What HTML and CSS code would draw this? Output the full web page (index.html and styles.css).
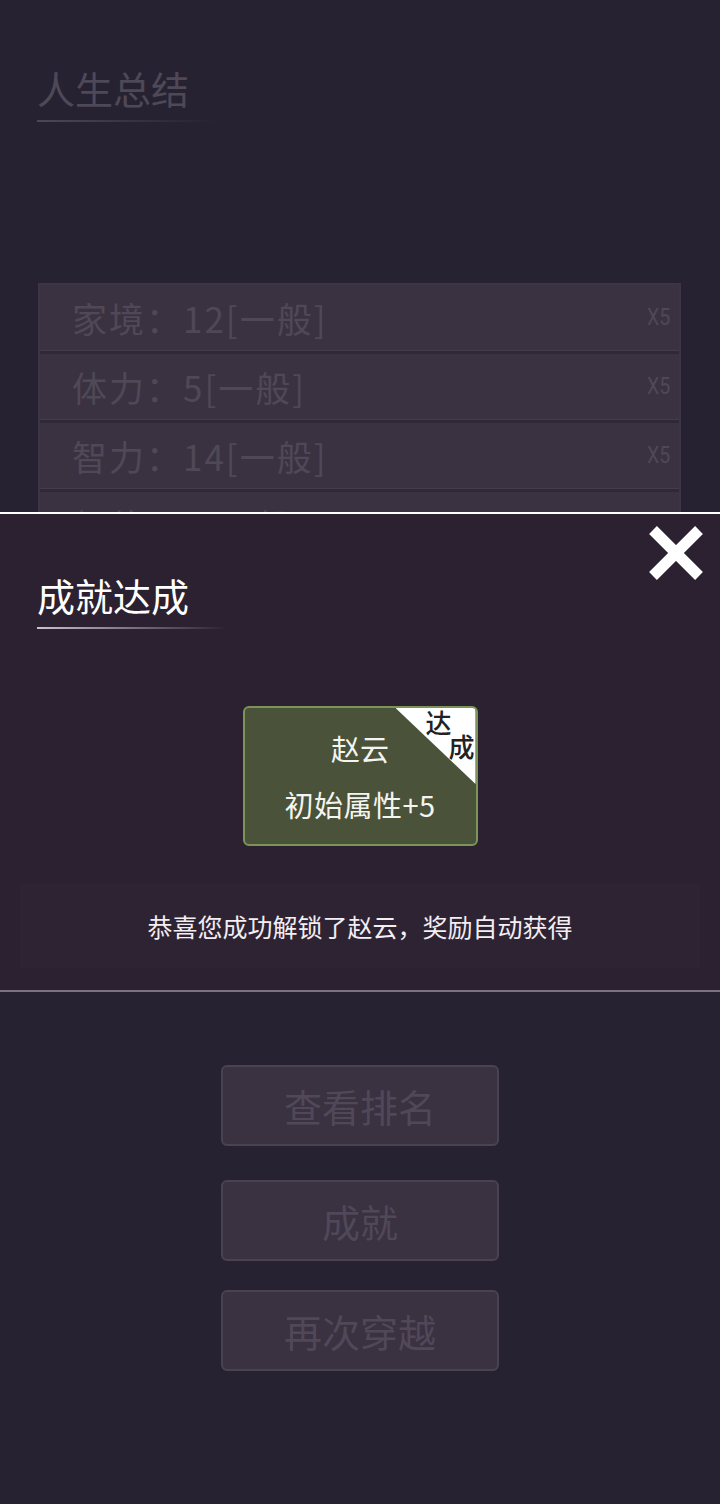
FILE: index.html
```html
<!DOCTYPE html>
<html>

<head>
  <meta charset="UTF-8">
  <title>人生总结</title>
  <link rel="stylesheet" href="styles.css">
</head>

<body>
  <section class="page">
    <div class="heading">
      <h2>人生总结</h2>
      <div class="heading-line"></div>
    </div>

    <!-- summary list -->
    <ul class="summary">
      <li><span>家境：12[一般]</span><em>X5</em></li>
      <li><span>体力：5[一般]</span><em>X5</em></li>
      <li><span>智力：14[一般]</span><em>X5</em></li>
      <li><span>颜值：6[一般]</span><em>X5</em></li>
    </ul>

    <div class="actions">
      <a href="#" class="action-btn">查看排名</a>
      <a href="#" class="action-btn second">成就</a>
      <a href="#" class="action-btn third">再次穿越</a>
    </div>
  </section>

  <!-- achievement popup -->
  <div class="popup">
    <a href="#" class="close-btn">
      <svg width="58" height="58" viewBox="0 0 58 58">
        <path d="M6 6 L52 52 M52 6 L6 52" stroke="#fff" stroke-width="11" stroke-linecap="butt" fill="none"/>
      </svg>
    </a>

    <div class="heading">
      <h2 class="popup-title">成就达成</h2>
      <div class="heading-line bright"></div>
    </div>

    <div class="card">
      <div class="card-corner"></div>
      <span class="corner-a">达</span>
      <span class="corner-b">成</span>
      <p class="card-name">赵云</p>
      <p class="card-reward">初始属性+5</p>
    </div>

    <div class="message">恭喜您成功解锁了赵云，奖励自动获得</div>
  </div>
</body>

</html>
```

FILE: styles.css
```css
body {
  font-family: "Noto Sans CJK SC", "Noto Sans", sans-serif;
  background-color: #262232;
  margin: 0;
  padding: 0;
  width: 720px;
  height: 1504px;
  overflow: hidden;
  position: relative;
}

.page {
  padding-top: 68px;
}

.heading {
  padding-left: 37px;
}

h2 {
  margin: 0;
  font-size: 38px;
  font-weight: normal;
  line-height: 40px;
  color: #4f4857;
}

.heading-line {
  margin-top: 12px;
  width: 180px;
  height: 2px;
  background: linear-gradient(to right, #4d4656, #4d465600);
}

/* summary list, the rest of it lies under the popup */
.summary {
  list-style-type: none;
  margin: 161px 0 0 38px;
  padding: 0;
  width: 639px;
  height: 480px;
  border: 2px solid #3e3447;
  background-color: #2e2838;
}

.summary li {
  display: flex;
  align-items: center;
  justify-content: space-between;
  height: 65px;
  margin-bottom: 3px;
  padding: 0 7px 0 32px;
  background-color: #3a3241;
  border-bottom: 1px solid #443b4b;
}

.summary li span {
  font-size: 35px;
  letter-spacing: 2px;
  color: #4f4857;
}

.summary li em {
  font-style: normal;
  font-family: Roboto, sans-serif;
  font-size: 23px;
  color: #4f4857;
  transform: scaleX(0.85);
}

/* buttons */
.actions {
  display: flex;
  flex-direction: column;
  align-items: center;
  margin-top: 298px;
}

.action-btn {
  display: flex;
  align-items: center;
  justify-content: center;
  width: 274px;
  height: 77px;
  border: 2px solid #4a4251;
  border-radius: 6px;
  background-color: #3a3141;
  color: #504858;
  font-size: 38px;
  text-decoration: none;
}

.action-btn.second {
  margin-top: 34px;
}

.action-btn.third {
  margin-top: 29px;
}

/* popup */
.popup {
  position: absolute;
  top: 512px;
  left: 0;
  width: 720px;
  height: 476px;
  background-color: #2c2130;
  border-top: 2px solid #ffffff;
  border-bottom: 2px solid #7a7280;
}

.close-btn {
  position: absolute;
  top: 10px;
  right: 15px;
}

.popup .heading {
  padding-top: 61px;
}

.popup-title {
  color: #ffffff;
}

.heading-line.bright {
  width: 190px;
  background: linear-gradient(to right, #c9c3cc, #c9c3cc00);
}

.card {
  position: relative;
  overflow: hidden;
  margin: 77px auto 0;
  width: 231px;
  height: 136px;
  border: 2px solid #7b9559;
  border-radius: 6px;
  background-color: #4a5239;
  text-align: center;
  color: #f4f4f0;
}

.card p {
  margin: 0;
}

.card-name {
  padding-top: 22px;
  font-size: 29px;
  line-height: 36px;
}

.card-reward {
  padding-top: 20px;
  font-size: 29px;
  line-height: 36px;
  letter-spacing: 0.5px;
}

.card-corner {
  position: absolute;
  top: 0;
  right: 0;
  width: 80px;
  height: 76px;
  background-color: #ffffff;
  clip-path: polygon(0 0, 100% 0, 100% 100%);
}

.corner-a,
.corner-b {
  position: absolute;
  font-size: 26px;
  line-height: 28px;
  font-weight: 500;
  color: #222222;
}

.corner-a {
  top: 0;
  right: 24px;
}

.corner-b {
  top: 24px;
  right: 1px;
}

.message {
  margin: 38px 20px 0;
  padding: 28px 0;
  text-align: center;
  font-size: 25px;
  line-height: 28px;
  color: #f2eef2;
  background-color: #ffffff03;
}
```
